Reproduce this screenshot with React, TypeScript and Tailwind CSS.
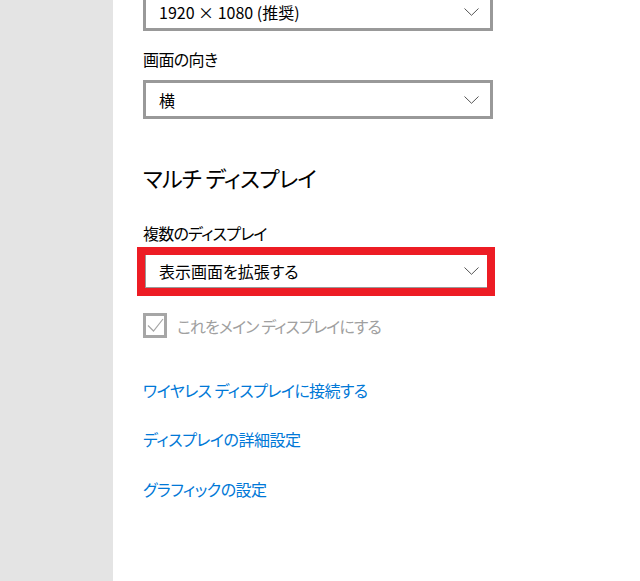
import React from "react";

function Chevron() {
  return (
    <svg width="15" height="8" viewBox="0 0 15 8" className="shrink-0 mr-[1px]">
      <polyline points="0.5,0.5 7.5,7.3 14.5,0.5" fill="none" stroke="#555" strokeWidth="1" />
    </svg>
  );
}

function Dropdown({ value, className = "" }: { value: string; className?: string }) {
  return (
    <div
      className={`flex items-center justify-between w-[350px] h-[39px] border-[3px] border-[#999999] bg-white pl-[13px] pr-[10px] text-[16px] text-black ${className}`}
    >
      <span>{value}</span>
      <Chevron />
    </div>
  );
}

export default function App() {
  return (
    <div
      className="flex w-[640px] h-[581px] overflow-hidden bg-white [font-feature-settings:'palt']"
      style={{ fontFamily: "'Noto Sans CJK JP', 'Noto Sans', sans-serif" }}
    >
      <div className="w-[113px] shrink-0 bg-[#e4e4e4]" />
      <div className="flex flex-col pl-[30px]">
        <Dropdown value="1920 × 1080 (推奨)" className="mt-[-8px]" />

        <div className="mt-[14px] mb-[7px] text-[16px] leading-[28px] tracking-[-0.6px] text-black">画面の向き</div>
        <Dropdown value="横" />

        <h2 className="mt-[40px] text-[22px] leading-[36px] tracking-[-0.7px] font-normal text-black">マルチ ディスプレイ</h2>

        <div className="mt-[24px] mb-[4px] text-[16px] leading-[28px] tracking-[-0.8px] text-black">複数のディスプレイ</div>
        <div className="relative">
          <Dropdown value="表示画面を拡張する" />
          <div className="absolute left-[-6px] top-[-4px] right-[-2px] bottom-[-6px] border-[8px] border-[#ed1c24]" />
        </div>

        <div className="mt-[23px] flex items-center h-[25px] gap-[10px]">
          <div className="flex items-center justify-center w-[24px] h-[25px] border-[3px] border-[#a6a6a6]">
            <svg width="17" height="15" viewBox="0 0 17 15">
              <polyline points="1,7.5 6.5,13 16,1" fill="none" stroke="#a6a6a6" strokeWidth="1.2" />
            </svg>
          </div>
          <span className="text-[16px] tracking-[-0.9px] text-[#a0a0a0]">これをメイン ディスプレイにする</span>
        </div>

        <a className="mt-[38px] text-[16px] leading-[28px] tracking-[-0.6px] text-[#0078d7]">ワイヤレス ディスプレイに接続する</a>
        <a className="mt-[21px] text-[16px] leading-[28px] tracking-[-0.5px] text-[#0078d7]">ディスプレイの詳細設定</a>
        <a className="mt-[22px] text-[16px] leading-[28px] tracking-[-0.5px] text-[#0078d7]">グラフィックの設定</a>
      </div>
    </div>
  );
}
